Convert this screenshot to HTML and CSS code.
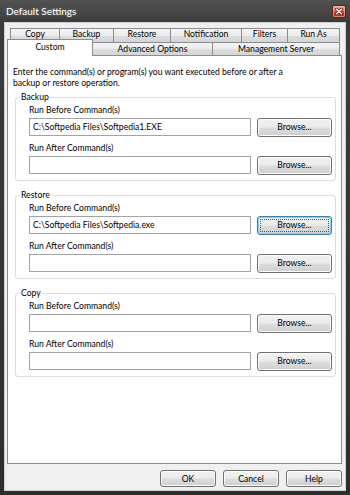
FILE: index.html
```html
<!DOCTYPE html>
<html lang="en">
<head>
    <meta charset="UTF-8">
    <meta name="viewport" content="width=device-width, initial-scale=1.0">
    <title>Default Settings</title>
    <link rel="stylesheet" href="styles.css">
</head>
<body>
    <div class="window">
        <!-- Title bar -->
        <div class="titlebar">
            <span class="title">Default Settings</span>
            <div class="close-btn" title="Close">
                <svg width="8" height="7" viewBox="0 0 8 7">
                    <path d="M1.5 1.2 L6.5 5.8 M6.5 1.2 L1.5 5.8" stroke="#6a1c10" stroke-width="2.8" stroke-linecap="round"/>
                    <path d="M1.5 1.2 L6.5 5.8 M6.5 1.2 L1.5 5.8" stroke="#ffffff" stroke-width="1.4" stroke-linecap="round"/>
                </svg>
            </div>
        </div>

        <div class="client">
            <!-- Tabs -->
            <div class="tabs">
                <div class="tab-row row-back">
                    <div class="tab">Copy</div>
                    <div class="tab">Backup</div>
                    <div class="tab">Restore</div>
                    <div class="tab">Notification</div>
                    <div class="tab">Filters</div>
                    <div class="tab">Run As</div>
                </div>
                <div class="tab-row row-front">
                    <div class="tab active">Custom</div>
                    <div class="tab">Advanced Options</div>
                    <div class="tab">Management Server</div>
                </div>
            </div>

            <!-- Custom page -->
            <div class="tab-panel">
                <p class="intro">Enter the command(s) or program(s) you want executed before or after a backup or restore operation.</p>

                <fieldset class="group">
                    <legend>Backup</legend>
                    <div class="field">
                        <label class="field-label">Run Before Command(s)</label>
                        <div class="field-row">
                            <input type="text" class="cmd-input" value="C:\Softpedia Files\Softpedia1.EXE">
                            <button class="btn browse-btn">Browse...</button>
                        </div>
                    </div>
                    <div class="field">
                        <label class="field-label">Run After Command(s)</label>
                        <div class="field-row">
                            <input type="text" class="cmd-input" value="">
                            <button class="btn browse-btn">Browse...</button>
                        </div>
                    </div>
                </fieldset>

                <fieldset class="group">
                    <legend>Restore</legend>
                    <div class="field">
                        <label class="field-label">Run Before Command(s)</label>
                        <div class="field-row">
                            <input type="text" class="cmd-input" value="C:\Softpedia Files\Softpedia.exe">
                            <button class="btn browse-btn focused">Browse...</button>
                        </div>
                    </div>
                    <div class="field">
                        <label class="field-label">Run After Command(s)</label>
                        <div class="field-row">
                            <input type="text" class="cmd-input" value="">
                            <button class="btn browse-btn">Browse...</button>
                        </div>
                    </div>
                </fieldset>

                <fieldset class="group">
                    <legend>Copy</legend>
                    <div class="field">
                        <label class="field-label">Run Before Command(s)</label>
                        <div class="field-row">
                            <input type="text" class="cmd-input" value="">
                            <button class="btn browse-btn">Browse...</button>
                        </div>
                    </div>
                    <div class="field">
                        <label class="field-label">Run After Command(s)</label>
                        <div class="field-row">
                            <input type="text" class="cmd-input" value="">
                            <button class="btn browse-btn">Browse...</button>
                        </div>
                    </div>
                </fieldset>
            </div>

            <!-- Dialog buttons -->
            <div class="dialog-buttons">
                <button class="btn dialog-btn">OK</button>
                <button class="btn dialog-btn">Cancel</button>
                <button class="btn dialog-btn">Help</button>
            </div>
        </div>
    </div>
</body>
</html>
```

FILE: styles.css
```css
/* Reset */
* {
    margin: 0;
    padding: 0;
    box-sizing: border-box;
}

html, body {
    width: 100%;
    height: 100%;
    overflow: hidden;
    background: #2f2f2f;
}

body {
    font-family: Lato, "Liberation Sans", sans-serif;
    font-size: 8.6px;
    color: #000;
}

/* Window frame */
.window {
    display: flex;
    flex-direction: column;
    height: 100vh;
    padding: 0 4px 4px;
    background: linear-gradient(#525252 0, #3c3c3c 22px, #2e2e2e 100%);
}

.titlebar {
    height: 22px;
    display: flex;
    align-items: center;
    justify-content: space-between;
    padding-left: 2px;
}

.title {
    color: #fff;
    font-size: 10px;
    text-shadow: 0 0 3px rgba(255, 255, 255, 0.35);
}

.close-btn {
    width: 14px;
    height: 13px;
    display: flex;
    align-items: center;
    justify-content: center;
    border: 1px solid #5e2016;
    border-radius: 2px;
    background: linear-gradient(#eba896 0%, #dc7358 45%, #cc4227 55%, #bd2f16 100%);
    box-shadow: inset 0 0 0 1px rgba(255, 210, 190, 0.5);
}

/* Client area */
.client {
    flex: 1;
    display: flex;
    flex-direction: column;
    background: #f0f0f0;
    border: 1px solid #cfcfcf;
    padding: 5px 3px 3px 2px;
}

/* Tabs */
.tab-row {
    display: grid;
}

.row-back {
    grid-template-columns: 49px 54px 57px 71px 46px 53px;
    margin-left: 3px;
    height: 14px;
}

.row-back .tab {
    padding-bottom: 3px;
}

.row-front {
    grid-template-columns: 83px 120px 128px;
    margin-left: 2px;
    height: 13px;
}

.tab {
    display: flex;
    align-items: center;
    justify-content: center;
    border: 1px solid #898c95;
    border-bottom: none;
    border-right: none;
    background: linear-gradient(#f4f4f4 0%, #ececec 50%, #dedede 51%, #d4d4d4 100%);
    white-space: nowrap;
}

.tab:last-child {
    border-right: 1px solid #898c95;
}

.tab.active {
    position: relative;
    z-index: 1;
    margin: -3px -1px -1px -2px;
    border-right: 1px solid #898c95;
    background: #fff;
    padding-bottom: 2px;
}

/* Tab page */
.tab-panel {
    flex: 1;
    background: #fff;
    border: 1px solid #898c95;
    padding: 0 5px;
}

.intro {
    margin-top: 11px;
    line-height: 11px;
    max-width: 285px;
}

.group {
    border: 1px solid #d5dfe5;
    border-radius: 3px;
    margin: 3px 0 9px 2px;
    padding: 2px 3px 6px 13px;
}

.group legend {
    margin-left: -9px;
    padding: 0 1px;
    line-height: 11px;
}

.field + .field {
    margin-top: 7px;
}

.field-label {
    display: block;
    line-height: 11px;
    margin-bottom: 2px;
}

.field-row {
    display: flex;
    align-items: center;
    gap: 6px;
    height: 18px;
}

.cmd-input {
    flex: 1;
    height: 18px;
    border: 1px solid #a3a3a3;
    padding: 0 3px;
    font-family: inherit;
    font-size: 8.6px;
    color: #000;
    background: #fff;
}

/* Buttons */
.btn {
    font-family: inherit;
    font-size: 8.6px;
    color: #000;
    border: 1px solid #707070;
    border-radius: 3px;
    background: linear-gradient(#f2f2f2 0%, #ebebeb 48%, #dddddd 52%, #cfcfcf 100%);
    box-shadow: inset 0 0 0 1px #fbfbfb;
}

.browse-btn {
    width: 75px;
    height: 19px;
}

.browse-btn.focused {
    border-color: #3c7fb1;
    box-shadow: inset 0 0 0 1px #7fd3f5;
    outline: 1px dotted #555;
    outline-offset: -4px;
}

.dialog-buttons {
    display: flex;
    justify-content: flex-end;
    gap: 7px;
    margin-top: 6px;
}

.dialog-btn {
    width: 56px;
    height: 17px;
}
```
